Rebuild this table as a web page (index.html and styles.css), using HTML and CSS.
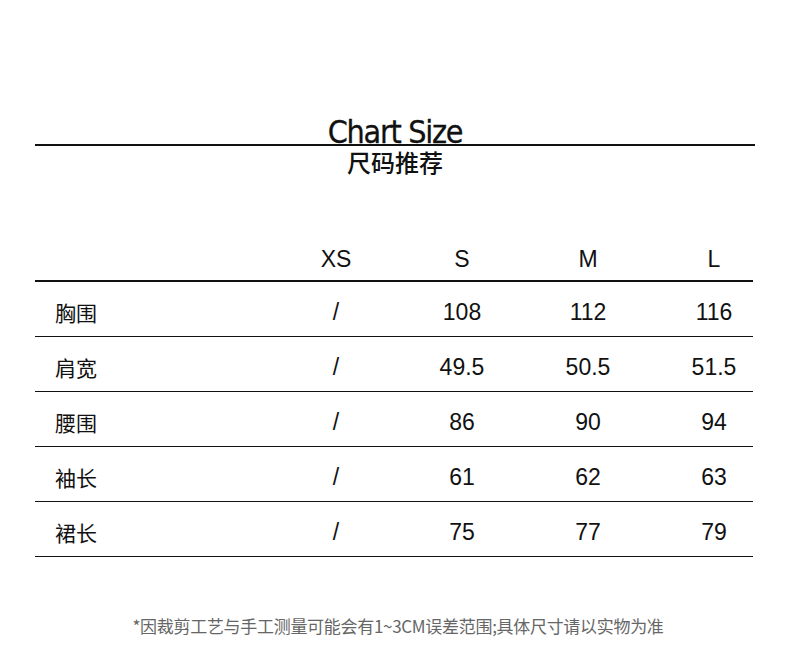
FILE: index.html
```html
<!DOCTYPE html>
<html lang="zh">
<head>
<meta charset="utf-8">
<title>Chart Size</title>
<link rel="stylesheet" href="styles.css">
</head>
<body>
<div class="page">
  <header class="head">
    <h1 class="title">Chart Size</h1>
    <div class="rule"></div>
    <h2 class="subtitle">尺码推荐</h2>
  </header>

  <div class="table">
    <div class="row row-head">
      <div class="cell label"></div>
      <div class="cell">XS</div>
      <div class="cell">S</div>
      <div class="cell">M</div>
      <div class="cell last">L</div>
    </div>
    <div class="row">
      <div class="cell label">胸围</div>
      <div class="cell">/</div>
      <div class="cell">108</div>
      <div class="cell">112</div>
      <div class="cell last">116</div>
    </div>
    <div class="row">
      <div class="cell label">肩宽</div>
      <div class="cell">/</div>
      <div class="cell">49.5</div>
      <div class="cell">50.5</div>
      <div class="cell last">51.5</div>
    </div>
    <div class="row">
      <div class="cell label">腰围</div>
      <div class="cell">/</div>
      <div class="cell">86</div>
      <div class="cell">90</div>
      <div class="cell last">94</div>
    </div>
    <div class="row">
      <div class="cell label">袖长</div>
      <div class="cell">/</div>
      <div class="cell">61</div>
      <div class="cell">62</div>
      <div class="cell last">63</div>
    </div>
    <div class="row">
      <div class="cell label">裙长</div>
      <div class="cell">/</div>
      <div class="cell">75</div>
      <div class="cell">77</div>
      <div class="cell last">79</div>
    </div>
  </div>

  <p class="note">*因裁剪工艺与手工测量可能会有1~3CM误差范围;具体尺寸请以实物为准</p>
</div>
</body>
</html>
```

FILE: styles.css
```css
html, body {
  margin: 0;
  padding: 0;
  background: #ffffff;
}

.page {
  width: 790px;
  height: 659px;
  padding-top: 112px;
  box-sizing: border-box;
  font-family: "Liberation Sans", Arial, "Noto Sans CJK SC", sans-serif;
  color: #111;
}

.head {
  display: flex;
  flex-direction: column;
  align-items: center;
}

.title {
  margin: 0;
  font-family: "Liberation Sans Narrow", "DejaVu Sans Condensed", "Liberation Sans", sans-serif;
  font-weight: normal;
  font-size: 32px;
  line-height: 40px;
  height: 32px;
  letter-spacing: -1.3px;
  color: #111;
  position: relative;
  z-index: 1;
  -webkit-text-stroke: 0.3px #111;
}

.rule {
  align-self: stretch;
  margin: 0 35px;
  height: 2px;
  background: #111;
}

.subtitle {
  margin: 0;
  font-family: "Noto Sans CJK SC", sans-serif;
  font-weight: 500;
  font-size: 24px;
  line-height: 31px;
  color: #111;
}

.table {
  margin: 62px 37px 0 35px;
}

.row {
  display: grid;
  grid-template-columns: 238px 126px 126px 126px 102px;
  height: 55px;
  border-bottom: 1px solid #111;
  box-sizing: border-box;
  align-items: center;
  padding-top: 6px;
  font-size: 23px;
}

.row-head {
  height: 43px;
  border-bottom: 2px solid #111;
  align-items: start;
  padding-top: 6px;
}

.cell {
  text-align: center;
  line-height: 28px;
}

.cell.last {
  padding-left: 24px;
}

.label {
  text-align: left;
  padding-left: 20px;
  font-family: "Noto Sans CJK SC", sans-serif;
  font-size: 21px;
}

.note {
  margin: 57px 0 0;
  padding-left: 6px;
  text-align: center;
  font-family: "Noto Sans CJK SC", sans-serif;
  font-size: 17px;
  line-height: 24px;
  color: #666;
  letter-spacing: -0.3px;
}
```
